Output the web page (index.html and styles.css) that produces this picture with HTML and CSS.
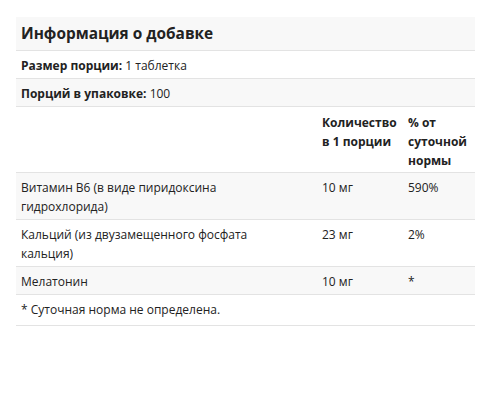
FILE: index.html
```html
<!DOCTYPE html>
<html lang="ru">
<head>
<meta charset="utf-8">
<title>Информация о добавке</title>
<link rel="stylesheet" href="styles.css">
</head>
<body>
<div class="wrap">
<table class="facts">
  <colgroup>
    <col class="c-name">
    <col class="c-amt">
    <col class="c-dv">
  </colgroup>
  <tbody>
    <tr class="shade"><th colspan="3" class="title">Информация о добавке</th></tr>
    <tr><td colspan="3"><b>Размер порции:</b> 1 таблетка</td></tr>
    <tr class="shade"><td colspan="3"><b>Порций в упаковке:</b> 100</td></tr>
    <tr class="head"><td class="name"></td><td><b>Количество в&nbsp;1&nbsp;порции</b></td><td><b>% от суточной нормы</b></td></tr>
    <tr class="shade"><td class="name">Витамин B6 (в виде пиридоксина гидрохлорида)</td><td>10 мг</td><td>590%</td></tr>
    <tr><td class="name">Кальций (из двузамещенного фосфата кальция)</td><td>23 мг</td><td>2%</td></tr>
    <tr class="shade"><td class="name">Мелатонин</td><td>10 мг</td><td>*</td></tr>
    <tr class="note"><td colspan="3">* Суточная норма не определена.</td></tr>
  </tbody>
</table>
</div>
</body>
</html>
```
FILE: styles.css
```css
html, body {
  margin: 0;
  padding: 0;
  background: #fff;
}
.wrap {
  padding: 17px 5px 0 16px;
}
.facts {
  width: 459px;
  border-collapse: collapse;
  table-layout: fixed;
  font-family: "Open Sans", "Liberation Sans", sans-serif;
  font-size: 12px;
  line-height: 19px;
  color: #222;
}
.c-name { width: 301px; }
.c-amt { width: 86px; }
.c-dv { width: 72px; }
.facts td, .facts th {
  padding: 5px 5px 3px;
  border-bottom: 1px solid #e3e3e3;
  text-align: left;
  vertical-align: top;
}
.facts td.name { padding-right: 24px; }
.facts b { font-weight: 700; }
.shade { background: #f8f8f8; }
.facts .title {
  padding: 4px 5px;
  font-size: 15.4px;
  line-height: 25px;
  font-weight: 700;
}
.facts .head td { padding-top: 6px; padding-bottom: 2px; }
.facts .note td { padding-bottom: 6px; }
```
